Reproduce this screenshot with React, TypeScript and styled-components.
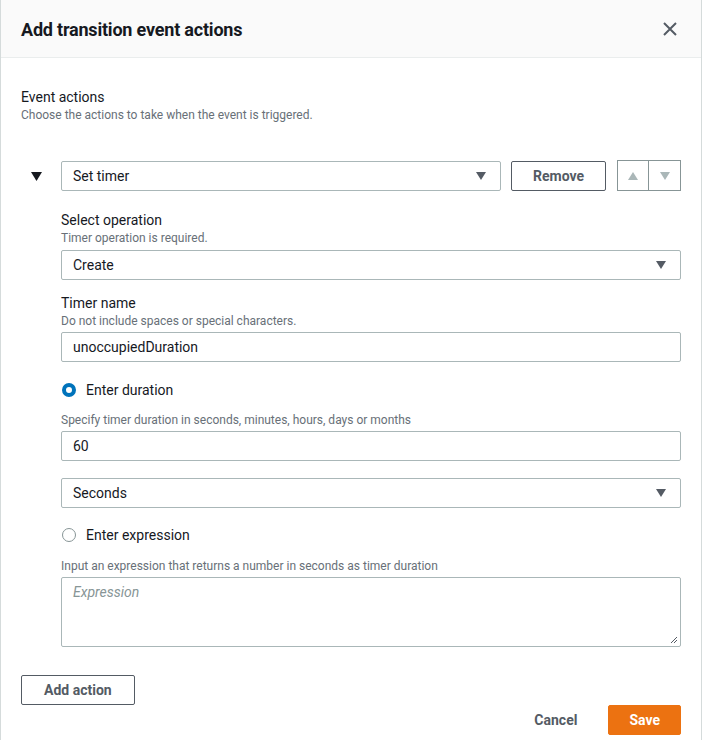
import styled, { createGlobalStyle } from 'styled-components'

const GlobalStyle = createGlobalStyle`
  html, body {
    margin: 0;
    padding: 0;
    background: #ffffff;
  }
  body {
    font-family: Roboto, "Liberation Sans", sans-serif;
    color: #16191f;
  }
`

const Modal = styled.div`
  width: 702px;
  height: 740px;
  border-left: 1px solid #d5dbdb;
  border-right: 1px solid #d5dbdb;
  box-sizing: border-box;
  display: flex;
  flex-direction: column;
  overflow: hidden;
`

const Header = styled.div`
  height: 58px;
  box-sizing: border-box;
  background: #fafafa;
  border-bottom: 1px solid #eaeded;
  display: flex;
  align-items: center;
  justify-content: space-between;
  padding: 1px 21px 0 20px;
`

const Title = styled.h2`
  margin: 0;
  font-size: 18px;
  font-weight: 700;
  letter-spacing: -0.2px;
  color: #16191f;
`

const CloseButton = styled.button`
  border: none;
  background: none;
  padding: 0;
  width: 20px;
  height: 20px;
  display: flex;
  align-items: center;
  justify-content: center;
  color: #545b64;
`

const Body = styled.div`
  padding: 29px 20px 0 20px;
  display: flex;
  flex-direction: column;
`

const SectionTitle = styled.div`
  font-size: 14px;
  line-height: 20px;
`

const Description = styled.div`
  font-size: 12px;
  line-height: 16px;
  color: #687078;
`

const ActionRow = styled.div`
  margin-top: 38px;
  display: flex;
  align-items: center;
  gap: 10px;
`

const Toggle = styled.div`
  width: 40px;
  box-sizing: border-box;
  padding-left: 10px;
  display: flex;
  margin-right: -10px;
  color: #16191f;
`

const SelectBox = styled.div<{ $grow?: boolean }>`
  flex: ${(p) => (p.$grow ? '1' : 'none')};
  height: 30px;
  box-sizing: border-box;
  border: 1px solid #aab7b8;
  border-radius: 2px;
  display: flex;
  align-items: center;
  justify-content: space-between;
  padding: 0 14px 0 11px;
  font-size: 14px;
  background: #fff;
`

const Button = styled.button<{ $pad?: number }>`
  height: 30px;
  box-sizing: border-box;
  border: 1px solid #545b64;
  border-radius: 2px;
  background: #fff;
  color: #545b64;
  font-family: inherit;
  font-size: 14px;
  font-weight: 700;
  padding: 0 ${(p) => p.$pad ?? 20}px;
`

const ArrowGroup = styled.div`
  display: flex;
  margin-left: 1px;
  height: 31px;
  margin-top: -1px;
`

const ArrowButton = styled.button<{ $first?: boolean }>`
  width: 32px;
  box-sizing: border-box;
  border: 1px solid #879596;
  border-left-width: ${(p) => (p.$first ? '1px' : '0')};
  background: #fff;
  display: flex;
  align-items: center;
  justify-content: center;
  padding: 0;
  color: #aab7b8;
`

const Nested = styled.div`
  padding-left: 40px;
  display: flex;
  flex-direction: column;
`

const Field = styled.div<{ $top: number }>`
  margin-top: ${(p) => p.$top}px;
  display: flex;
  flex-direction: column;
`

const Label = styled.div`
  font-size: 14px;
  line-height: 20px;
`

const Control = styled.div<{ $top?: number }>`
  margin-top: ${(p) => p.$top ?? 4}px;
  display: flex;
`

const TextInput = styled.div`
  flex: 1;
  height: 30px;
  box-sizing: border-box;
  border: 1px solid #aab7b8;
  border-radius: 2px;
  display: flex;
  align-items: center;
  padding: 0 11px;
  font-size: 14px;
`

const TextArea = styled.div`
  flex: 1;
  height: 70px;
  box-sizing: border-box;
  border: 1px solid #aab7b8;
  border-radius: 2px;
  padding: 6px 11px;
  font-size: 14px;
  font-style: italic;
  color: #879596;
  position: relative;
`

const Grip = styled.svg`
  position: absolute;
  right: 2px;
  bottom: 2px;
`

const RadioRow = styled.div<{ $top: number }>`
  margin-top: ${(p) => p.$top}px;
  display: flex;
  align-items: center;
  gap: 10px;
  font-size: 14px;
  line-height: 20px;
`

const Radio = styled.span<{ $checked?: boolean }>`
  width: 14px;
  height: 14px;
  box-sizing: border-box;
  border-radius: 50%;
  border: ${(p) => (p.$checked ? '4px solid #0073bb' : '1px solid #879596')};
  background: #fff;
  margin-left: 1px;
`

const Footer = styled.div`
  display: flex;
  flex-direction: column;
  padding: 0 20px;
`

const AddRow = styled.div`
  margin-top: 28px;
  display: flex;
`

const FooterActions = styled.div`
  margin-top: 0;
  display: flex;
  justify-content: flex-end;
  align-items: center;
  gap: 11px;
`

const LinkButton = styled.button`
  border: none;
  background: none;
  font-family: inherit;
  font-size: 14px;
  font-weight: 700;
  color: #545b64;
  height: 30px;
  padding: 0 20px;
`

const PrimaryButton = styled.button`
  height: 30px;
  border: 1px solid #ec7211;
  border-radius: 2px;
  background: #ec7211;
  color: #fff;
  font-family: inherit;
  font-size: 14px;
  font-weight: 700;
  padding: 0 20px;
`

function Caret({ size = 10 }: { size?: number }) {
  return (
    <svg width={size} height={size * 0.8} viewBox="0 0 10 8">
      <path d="M0 0h10L5 8z" fill="#545b64" />
    </svg>
  )
}

function Select({ value }: { value: string }) {
  return (
    <SelectBox $grow>
      <span>{value}</span>
      <Caret />
    </SelectBox>
  )
}

export default function App() {
  return (
    <>
      <GlobalStyle />
      <Modal>
        <Header>
          <Title>Add transition event actions</Title>
          <CloseButton aria-label="Close">
            <svg width="16" height="16" viewBox="0 0 16 16">
              <path d="M2 2l12 12M14 2L2 14" stroke="#545b64" strokeWidth="2" fill="none" />
            </svg>
          </CloseButton>
        </Header>
        <Body>
          <SectionTitle>Event actions</SectionTitle>
          <Description>Choose the actions to take when the event is triggered.</Description>
          <ActionRow>
            <Toggle>
              <svg width="11" height="9" viewBox="0 0 10 8">
                <path d="M0 0h10L5 8z" fill="#16191f" />
              </svg>
            </Toggle>
            <Select value="Set timer" />
            <Button $pad={21}>Remove</Button>
            <ArrowGroup>
              <ArrowButton $first aria-label="Move up">
                <svg width="10" height="8" viewBox="0 0 10 8">
                  <path d="M0 8h10L5 0z" fill="#aab7b8" />
                </svg>
              </ArrowButton>
              <ArrowButton aria-label="Move down">
                <svg width="10" height="8" viewBox="0 0 10 8">
                  <path d="M0 0h10L5 8z" fill="#aab7b8" />
                </svg>
              </ArrowButton>
            </ArrowGroup>
          </ActionRow>
          <Nested>
            <Field $top={19}>
              <Label>Select operation</Label>
              <Description>Timer operation is required.</Description>
              <Control>
                <Select value="Create" />
              </Control>
            </Field>
            <Field $top={13}>
              <Label>Timer name</Label>
              <Description>Do not include spaces or special characters.</Description>
              <Control $top={3}>
                <TextInput>unoccupiedDuration</TextInput>
              </Control>
            </Field>
            <RadioRow $top={18}>
              <Radio $checked />
              <span>Enter duration</span>
            </RadioRow>
            <Field $top={12}>
              <Description>Specify timer duration in seconds, minutes, hours, days or months</Description>
              <Control $top={3}>
                <TextInput>60</TextInput>
              </Control>
              <Control $top={17}>
                <Select value="Seconds" />
              </Control>
            </Field>
            <RadioRow $top={17}>
              <Radio />
              <span>Enter expression</span>
            </RadioRow>
            <Field $top={13}>
              <Description>Input an expression that returns a number in seconds as timer duration</Description>
              <Control $top={3}>
                <TextArea>
                  Expression
                  <Grip width="8" height="8" viewBox="0 0 8 8">
                    <path d="M7 1L1 7M7 4L4 7" stroke="#545b64" strokeWidth="1" />
                  </Grip>
                </TextArea>
              </Control>
            </Field>
          </Nested>
        </Body>
        <Footer>
          <AddRow>
            <Button $pad={22}>Add action</Button>
          </AddRow>
          <FooterActions>
            <LinkButton>Cancel</LinkButton>
            <PrimaryButton>Save</PrimaryButton>
          </FooterActions>
        </Footer>
      </Modal>
    </>
  )
}
